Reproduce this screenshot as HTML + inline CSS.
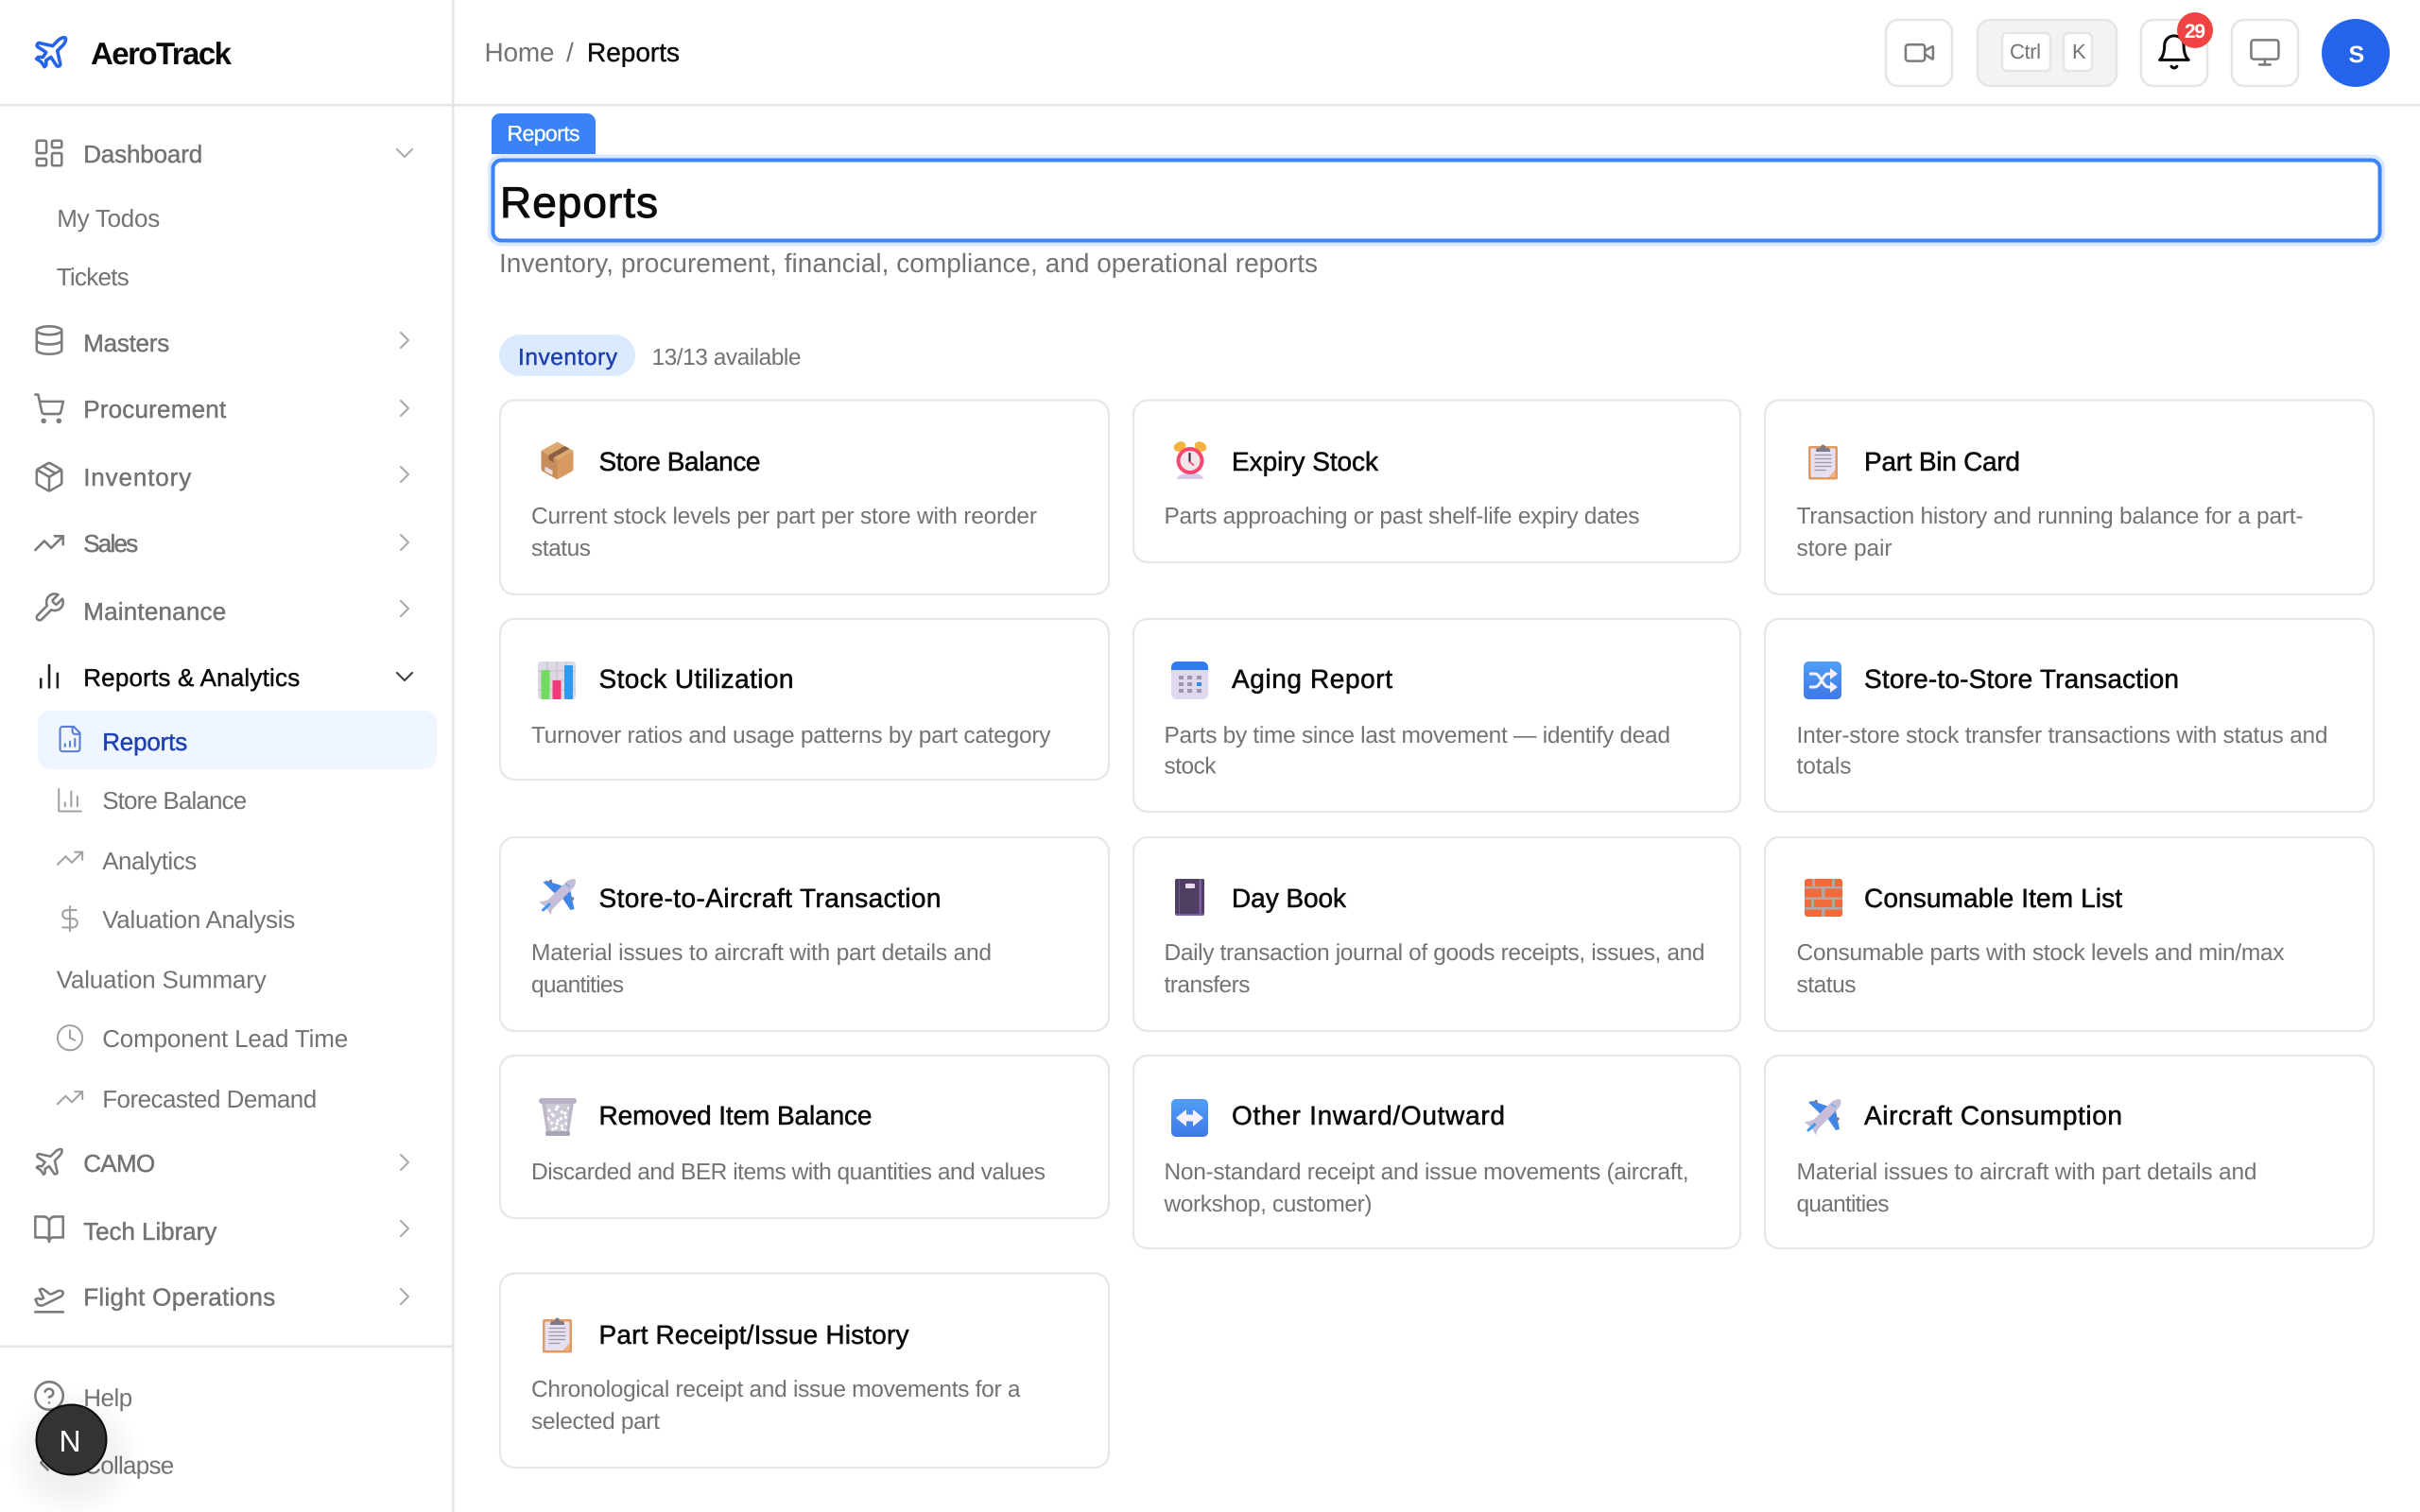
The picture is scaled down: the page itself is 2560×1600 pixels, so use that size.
<!DOCTYPE html>
<html lang="en">
<head>
<meta charset="utf-8">
<title>AeroTrack - Reports</title>
<style>
html,body{margin:0;padding:0;background:#fff;width:2560px;height:1600px;overflow:hidden}
svg{display:block}
text{font-family:"Liberation Sans",sans-serif;text-rendering:geometricPrecision}
.m{font-size:26px;fill:#737373;stroke:#737373;stroke-width:.45px;transform:translateX(-.8px)}
.s{font-size:26px;fill:#737373;transform:translateX(-.8px)}
.t{font-size:28px;fill:#0a0a0a;stroke:#0a0a0a;stroke-width:.55px}
.d{font-size:24.5px;fill:#737373;transform:translate(-.5px,-1px)}
.i{fill:none;stroke:#7c7c7c;stroke-width:1.75;stroke-linecap:round;stroke-linejoin:round}
.j{fill:none;stroke:#a3a3a3;stroke-width:1.6;stroke-linecap:round;stroke-linejoin:round}
.c{fill:none;stroke:#ababab;stroke-width:1.6;stroke-linecap:round;stroke-linejoin:round}
.card{fill:#fff;stroke:#e7e7e7;stroke-width:2.3}
.b{fill:#fff;stroke:#e5e5e5;stroke-width:2.5}
</style>
</head>
<body>
<svg xmlns="http://www.w3.org/2000/svg" width="2560" height="1600" viewBox="0 0 2560 1600">
<defs>
<linearGradient id="gb" x1="0" y1="0" x2="0" y2="1"><stop offset="0" stop-color="#4f9ff7"/><stop offset="1" stop-color="#3f78e6"/></linearGradient>
<radialGradient id="gs"><stop offset="0" stop-color="#000" stop-opacity=".09"/><stop offset=".55" stop-color="#000" stop-opacity=".05"/><stop offset="1" stop-color="#000" stop-opacity="0"/></radialGradient>
<symbol id="e-clip" viewBox="0 0 40 40">
<rect x="4.5" y="4" width="31" height="35.5" rx="2" fill="#e29a60"/>
<rect x="7" y="6.5" width="26" height="30.5" rx="1" fill="#e6e0f0"/>
<path d="M26 37l7-8v6a2 2 0 0 1-2 2z" fill="#efb184"/>
<path d="M11 13.5h18M11 17.5h18M11 21.5h18M11 25.5h18M11 29.5h12" stroke="#9c96ab" stroke-width="1.2" fill="none"/>
<path d="M12.5 9c0-2 1-3 3-3h1.5c.5-2 1.5-3.5 3-3.5s2.5 1.5 3 3.5h1.5c2 0 3 1 3 3v1h-15z" fill="#7f7a8a"/>
</symbol>
<symbol id="e-plane" viewBox="0 0 40 40">
<path d="M5 4.500 9 3 27 9 18 17z" fill="#3f86e8"/>
<path d="M23 18 33 9 38 33 34 34z" fill="#3f86e8"/>
<circle cx="13" cy="3.500" r="1.800" fill="#7e7a88"/><circle cx="36" cy="22" r="1.800" fill="#7e7a88"/>
<path d="M30 3.500c3-2 8-3 9-1.500s.5 5-1.500 8L17 31c-2 2-3 3-3.500 7.500L13 39 8 31 .5 25.500c3-.5 9-1.500 11-3.500z" fill="#c7bdd8"/>
<path d="M5 34l6.500-6" stroke="#3f98f0" stroke-width="3" stroke-linecap="round"/>
<path d="M29.500 6.500l4 3" stroke="#2f9cf0" stroke-width="1.500" stroke-dasharray="1.200 .8"/>
</symbol>
</defs>

<!-- chrome -->
<rect x="478" y="0" width="2.500" height="1600" fill="#e5e5e5"/>
<rect x="0" y="110" width="2560" height="2.500" fill="#e5e5e5"/>
<rect x="0" y="1423.500" width="478" height="2.500" fill="#e5e5e5"/>

<!-- logo -->
<g transform="translate(33.500,35) scale(1.700)" fill="none" stroke="#2563eb" stroke-width="2.100" stroke-linecap="round" stroke-linejoin="round"><path d="M17.800 19.200 16 11l3.500-3.500C21 6 21.500 4 21 3c-1-.5-3 0-4.500 1.500L13 8 4.800 6.200c-.5-.1-.9.1-1.100.5l-.3.5c-.2.500-.1 1 .3 1.300L9 12l-2 3H4l-1 1 3 2 2 3 1-1v-3l3-2 3.500 5.300c.3.4.8.5 1.300.3l.5-.2c.4-.3.6-.7.5-1.200z"/></g>
<text x="96" y="68" font-size="33" font-weight="700" fill="#0a0a0a" textLength="149">AeroTrack</text>

<!-- nav icons -->
<g transform="translate(34.400,144.400) scale(1.470)" class="i"><rect width="7" height="9" x="3" y="3" rx="1"/><rect width="7" height="5" x="14" y="3" rx="1"/><rect width="7" height="9" x="14" y="12" rx="1"/><rect width="7" height="5" x="3" y="16" rx="1"/></g>
<g transform="translate(34.400,342.400) scale(1.470)" class="i"><ellipse cx="12" cy="5" rx="9" ry="3"/><path d="M3 5V19A9 3 0 0 0 21 19V5"/><path d="M3 12A9 3 0 0 0 21 12"/></g>
<g transform="translate(34.400,414.500) scale(1.470)" class="i"><circle cx="8" cy="21" r="1"/><circle cx="19" cy="21" r="1"/><path d="M2.050 2.050h2l2.660 12.420a2 2 0 0 0 2 1.580h9.780a2 2 0 0 0 1.950-1.570l1.650-7.430H5.120"/></g>
<g transform="translate(34.400,487) scale(1.470)" class="i"><path d="M11 21.730a2 2 0 0 0 2 0l7-4A2 2 0 0 0 21 16V8a2 2 0 0 0-1-1.730l-7-4a2 2 0 0 0-2 0l-7 4A2 2 0 0 0 3 8v8a2 2 0 0 0 1 1.730z"/><path d="M12 22V12"/><path d="M3.300 7 12 12l8.700-5"/><path d="m7.500 4.270 9 5.150"/></g>
<g transform="translate(34.400,557) scale(1.470)" class="i"><polyline points="22 7 13.500 15.500 8.500 10.500 2 17"/><polyline points="16 7 22 7 22 13"/></g>
<g transform="translate(34.400,625.500) scale(1.470)" class="i"><path d="M14.700 6.300a1 1 0 0 0 0 1.400l1.600 1.600a1 1 0 0 0 1.400 0l3.770-3.770a6 6 0 0 1-7.940 7.940l-6.910 6.910a2.120 2.120 0 0 1-3-3l6.910-6.910a6 6 0 0 1 7.940-7.940l-3.760 3.760z"/></g>
<g transform="translate(34.400,698) scale(1.470)" class="i" style="stroke:#1f1f1f"><line x1="18" y1="20" x2="18" y2="10"/><line x1="12" y1="20" x2="12" y2="4"/><line x1="6" y1="20" x2="6" y2="14"/></g>
<g transform="translate(34.400,1212) scale(1.470)" class="i"><path d="M17.800 19.200 16 11l3.500-3.500C21 6 21.500 4 21 3c-1-.5-3 0-4.500 1.500L13 8 4.800 6.200c-.5-.1-.9.1-1.100.5l-.3.5c-.2.500-.1 1 .3 1.300L9 12l-2 3H4l-1 1 3 2 2 3 1-1v-3l3-2 3.500 5.300c.3.4.8.5 1.300.3l.5-.2c.4-.3.6-.7.5-1.200z"/></g>
<g transform="translate(34.400,1283) scale(1.470)" class="i"><path d="M2 3h6a4 4 0 0 1 4 4v14a3 3 0 0 0-3-3H2z"/><path d="M22 3h-6a4 4 0 0 0-4 4v14a3 3 0 0 1 3-3h7z"/></g>
<g transform="translate(34.400,1356) scale(1.470)" class="i"><path d="M2 22h20"/><path d="M6.360 17.400 4 17l-2-4 1.100-.55a2 2 0 0 1 1.800 0l.17.1a2 2 0 0 0 1.800 0L8 12 5 6l.9-.45a2 2 0 0 1 2.090.2l4.020 3a2 2 0 0 0 2.100.2l4.190-2.060a2.410 2.410 0 0 1 1.730-.17L21 7a1.400 1.400 0 0 1 .87 1.990l-.38.76c-.23.46-.6.84-1.070 1.080L7.580 17.200a2 2 0 0 1-1.220.18Z"/></g>
<g transform="translate(34.400,1459.400) scale(1.470)" class="i"><circle cx="12" cy="12" r="10"/><path d="M9.090 9a3 3 0 0 1 5.830 1c0 2-3 3-3 3"/><path d="M12 17h.01"/></g>
<g transform="translate(34.400,1530.400) scale(1.470)" class="i"><path d="m11 17-5-5 5-5"/><path d="m18 17-5-5 5-5"/></g>

<!-- active row -->
<rect x="40" y="752" width="422" height="62" rx="13" fill="#eff6ff"/>

<!-- sub icons -->
<g transform="translate(58.300,766.300) scale(1.310)" class="j" style="stroke:#5a7fd0"><path d="M15 2H6a2 2 0 0 0-2 2v16a2 2 0 0 0 2 2h12a2 2 0 0 0 2-2V7Z"/><path d="M14 2v4a2 2 0 0 0 2 2h4"/><path d="M8 18v-2"/><path d="M12 18v-4"/><path d="M16 18v-6"/></g>
<g transform="translate(58.300,831) scale(1.310)" class="j"><path d="M3 3v18h18"/><path d="M18 17V9"/><path d="M13 17V5"/><path d="M8 17v-3"/></g>
<g transform="translate(58.300,892.500) scale(1.310)" class="j"><polyline points="22 7 13.500 15.500 8.500 10.500 2 17"/><polyline points="16 7 22 7 22 13"/></g>
<g transform="translate(58.300,956.500) scale(1.310)" class="j"><line x1="12" y1="2" x2="12" y2="22"/><path d="M17 5H9.500a3.500 3.500 0 0 0 0 7h5a3.500 3.500 0 0 1 0 7H6"/></g>
<g transform="translate(58.300,1082.500) scale(1.310)" class="j"><circle cx="12" cy="12" r="10"/><polyline points="12 6 12 12 16 14"/></g>
<g transform="translate(58.300,1146) scale(1.310)" class="j"><polyline points="22 7 13.500 15.500 8.500 10.500 2 17"/><polyline points="16 7 22 7 22 13"/></g>

<!-- chevrons -->
<g transform="translate(412,146) scale(1.333)" class="c"><path d="m6 9 6 6 6-6"/></g>
<g transform="translate(412,344) scale(1.333)" class="c"><path d="m9 18 6-6-6-6"/></g>
<g transform="translate(412,416) scale(1.333)" class="c"><path d="m9 18 6-6-6-6"/></g>
<g transform="translate(412,486) scale(1.333)" class="c"><path d="m9 18 6-6-6-6"/></g>
<g transform="translate(412,558) scale(1.333)" class="c"><path d="m9 18 6-6-6-6"/></g>
<g transform="translate(412,628) scale(1.333)" class="c"><path d="m9 18 6-6-6-6"/></g>
<g transform="translate(412,700) scale(1.333)" class="c" style="stroke:#404040"><path d="m6 9 6 6 6-6"/></g>
<g transform="translate(412,1214) scale(1.333)" class="c"><path d="m9 18 6-6-6-6"/></g>
<g transform="translate(412,1284) scale(1.333)" class="c"><path d="m9 18 6-6-6-6"/></g>
<g transform="translate(412,1356) scale(1.333)" class="c"><path d="m9 18 6-6-6-6"/></g>

<!-- nav text -->
<text class="m" x="89" y="172" textLength="126">Dashboard</text>
<text class="s" x="61" y="240" textLength="109">My Todos</text>
<text class="s" x="60.500" y="302" textLength="77">Tickets</text>
<text class="m" x="89" y="372" textLength="91">Masters</text>
<text class="m" x="89" y="442" textLength="151">Procurement</text>
<text class="m" x="89" y="514" textLength="114">Inventory</text>
<text class="m" x="89" y="584" textLength="58">Sales</text>
<text class="m" x="89" y="656" textLength="151">Maintenance</text>
<text class="m" x="89" y="726" textLength="229" style="fill:#0a0a0a;stroke:#0a0a0a">Reports &amp; Analytics</text>
<text class="m" x="109" y="794" textLength="90" style="fill:#1e40af;stroke:#1e40af">Reports</text>
<text class="s" x="109" y="856" textLength="153">Store Balance</text>
<text class="s" x="109" y="920" textLength="100">Analytics</text>
<text class="s" x="109" y="982" textLength="204">Valuation Analysis</text>
<text class="s" x="60.500" y="1045.500" textLength="222">Valuation Summary</text>
<text class="s" x="109" y="1108" textLength="260">Component Lead Time</text>
<text class="s" x="109" y="1172" textLength="227">Forecasted Demand</text>
<text class="m" x="89" y="1240" textLength="76">CAMO</text>
<text class="m" x="89" y="1312" textLength="141">Tech Library</text>
<text class="m" x="89" y="1381.500" textLength="203">Flight Operations</text>
<text class="s" x="89" y="1488" textLength="52">Help</text>
<text class="s" x="89" y="1559.500" textLength="96">Collapse</text>

<!-- next indicator -->
<circle cx="76" cy="1538" r="72" fill="url(#gs)"/>
<circle cx="75.500" cy="1523.500" r="37" fill="#333" stroke="#0a0a0a" stroke-width="2"/>
<text x="62.500" y="1536" font-size="32" fill="#fff" textLength="24">N</text>

<!-- header -->
<text x="512.500" y="65" font-size="28" fill="#737373" textLength="74">Home</text>
<text x="599" y="65" font-size="28" fill="#737373">/</text>
<text x="621" y="65" font-size="28" fill="#0a0a0a" stroke="#0a0a0a" stroke-width=".4" textLength="98">Reports</text>

<rect class="b" x="1995" y="21" width="70" height="70" rx="13"/>
<g transform="translate(2013,38.500) scale(1.450)" class="i"><path d="m16 13 5.223 3.482a.5.5 0 0 0 .777-.416V7.870a.5.5 0 0 0-.752-.432L16 10.500"/><rect x="2" y="6" width="14" height="12" rx="2"/></g>

<rect x="2092" y="21" width="147" height="70" rx="13" fill="#f3f3f3" stroke="#e5e5e5" stroke-width="2.500"/>
<rect class="b" x="2118" y="35" width="51" height="40" rx="5"/>
<rect class="b" x="2183" y="35" width="30" height="40" rx="5"/>
<text x="2126" y="62" font-size="22" fill="#737373" textLength="33">Ctrl</text>
<text x="2192" y="62" font-size="22" fill="#737373" textLength="13">K</text>

<rect class="b" x="2265" y="21" width="70" height="70" rx="13"/>
<g transform="translate(2279.500,34.500) scale(1.700)" fill="none" stroke="#0a0a0a" stroke-width="1.800" stroke-linecap="round" stroke-linejoin="round"><path d="M6 8a6 6 0 0 1 12 0c0 7 3 9 3 9H3s3-2 3-9"/><path d="M10.300 21a1.940 1.940 0 0 0 3.400 0"/></g>
<circle cx="2322" cy="32" r="19" fill="#ef4444"/>
<text x="2311" y="40" font-size="21" font-weight="700" fill="#fff" textLength="22">29</text>

<rect class="b" x="2361" y="21" width="70" height="70" rx="13"/>
<g transform="translate(2378.500,38) scale(1.450)" class="i"><rect width="20" height="14" x="2" y="3" rx="2"/><line x1="8" y1="21" x2="16" y2="21"/><line x1="12" y1="17" x2="12" y2="21"/></g>

<circle cx="2492" cy="56" r="36" fill="#2563eb"/>
<text x="2484.500" y="66" font-size="25" font-weight="700" fill="#fff" textLength="14">S</text>

<!-- page title -->
<path d="M520 163v-34a9 9 0 0 1 9-9h92a9 9 0 0 1 9 9v34z" fill="#3b82f6"/>
<text x="536.500" y="149" font-size="23" fill="#fff" stroke="#fff" stroke-width=".3" textLength="77">Reports</text>
<rect x="519" y="166.500" width="2001" height="91" rx="11" fill="#fff" stroke="#dbe8fd" stroke-width="6"/>
<rect x="521.500" y="169.500" width="1996" height="85" rx="9" fill="#fff" stroke="#3b82f6" stroke-width="4"/>
<text x="529" y="230" font-size="46" font-weight="400" fill="#0a0a0a" stroke="#0a0a0a" stroke-width="1" textLength="167">Reports</text>
<text x="528" y="288" font-size="28" fill="#737373" textLength="866">Inventory, procurement, financial, compliance, and operational reports</text>

<rect x="528" y="354" width="144" height="44" rx="22" fill="#dbeafe"/>
<text x="548" y="386" font-size="24.500" fill="#1e40af" stroke="#1e40af" stroke-width=".45" textLength="105">Inventory</text>
<text x="689.500" y="386" font-size="24.500" fill="#737373" textLength="158">13/13 available</text>

<!-- cards -->
<rect class="card" x="529" y="423.500" width="644" height="205.500" rx="15"/>
<rect class="card" x="1199" y="423.500" width="642" height="171.500" rx="15"/>
<rect class="card" x="1867" y="423.500" width="644" height="205.500" rx="15"/>
<rect class="card" x="529" y="655" width="644" height="170" rx="15"/>
<rect class="card" x="1199" y="655" width="642" height="204" rx="15"/>
<rect class="card" x="1867" y="655" width="644" height="204" rx="15"/>
<rect class="card" x="529" y="886" width="644" height="205" rx="15"/>
<rect class="card" x="1199" y="886" width="642" height="205" rx="15"/>
<rect class="card" x="1867" y="886" width="644" height="205" rx="15"/>
<rect class="card" x="529" y="1117" width="644" height="172" rx="15"/>
<rect class="card" x="1199" y="1117" width="642" height="204" rx="15"/>
<rect class="card" x="1867" y="1117" width="644" height="204" rx="15"/>
<rect class="card" x="529" y="1347.500" width="644" height="205.500" rx="15"/>

<!-- card text -->
<text class="t" x="633.500" y="498" textLength="171">Store Balance</text>
<text class="d" x="562.500" y="555" textLength="535">Current stock levels per part per store with reorder</text>
<text class="d" x="562.500" y="589" textLength="63">status</text>
<text class="t" x="1303" y="498" textLength="155">Expiry Stock</text>
<text class="d" x="1232" y="555" textLength="503">Parts approaching or past shelf-life expiry dates</text>
<text class="t" x="1972" y="498" textLength="165">Part Bin Card</text>
<text class="d" x="1901" y="555" textLength="536">Transaction history and running balance for a part-</text>
<text class="d" x="1901" y="589" textLength="101">store pair</text>

<text class="t" x="633.500" y="728" textLength="206">Stock Utilization</text>
<text class="d" x="562.500" y="787" textLength="549.500">Turnover ratios and usage patterns by part category</text>
<text class="t" x="1303" y="728" textLength="170">Aging Report</text>
<text class="d" x="1232" y="787" textLength="535.500">Parts by time since last movement — identify dead</text>
<text class="d" x="1232" y="819.500" textLength="55">stock</text>
<text class="t" x="1972" y="728" textLength="333">Store-to-Store Transaction</text>
<text class="d" x="1901" y="787" textLength="562">Inter-store stock transfer transactions with status and</text>
<text class="d" x="1901" y="819.500" textLength="58">totals</text>

<text class="t" x="633.500" y="960" textLength="362">Store-to-Aircraft Transaction</text>
<text class="d" x="562.500" y="1017" textLength="487">Material issues to aircraft with part details and</text>
<text class="d" x="562.500" y="1051" textLength="98">quantities</text>
<text class="t" x="1303" y="960" textLength="121">Day Book</text>
<text class="d" x="1232" y="1017" textLength="572">Daily transaction journal of goods receipts, issues, and</text>
<text class="d" x="1232" y="1051" textLength="91">transfers</text>
<text class="t" x="1972" y="960" textLength="273">Consumable Item List</text>
<text class="d" x="1901" y="1017" textLength="516">Consumable parts with stock levels and min/max</text>
<text class="d" x="1901" y="1051" textLength="63">status</text>

<text class="t" x="633.500" y="1190" textLength="289">Removed Item Balance</text>
<text class="d" x="562.500" y="1249" textLength="544">Discarded and BER items with quantities and values</text>
<text class="t" x="1303" y="1190" textLength="289">Other Inward/Outward</text>
<text class="d" x="1232" y="1249" textLength="555">Non-standard receipt and issue movements (aircraft,</text>
<text class="d" x="1232" y="1283" textLength="220">workshop, customer)</text>
<text class="t" x="1972" y="1190" textLength="273">Aircraft Consumption</text>
<text class="d" x="1901" y="1249" textLength="487">Material issues to aircraft with part details and</text>
<text class="d" x="1901" y="1283" textLength="98">quantities</text>

<text class="t" x="633.500" y="1422" textLength="328">Part Receipt/Issue History</text>
<text class="d" x="562.500" y="1479" textLength="517.500">Chronological receipt and issue movements for a</text>
<text class="d" x="562.500" y="1513" textLength="136">selected part</text>

<!-- emoji: box -->
<g transform="translate(572.500,467.500)">
<path d="M17 0 34 9.500 17 19 0 9.500z" fill="#dba86e"/>
<path d="M0 9.500 17 19V40L1 31a2 2 0 0 1-1-2z" fill="#c98d5c"/>
<path d="M34 9.500 17 19V40l16-9a2 2 0 0 0 1-2z" fill="#d79a62"/>
<path d="M8 14 25 4.500 30 7.200 13 17v5l-5-3z" fill="#8f5f45"/>
<path d="M4 26l8 4.500v5L4 31z" fill="#e8dfe6"/>
</g>
<!-- emoji: clock -->
<g transform="translate(1241,467)">
<ellipse cx="7" cy="5.500" rx="6.500" ry="5" fill="#f4b33e" transform="rotate(-25 7 5.500)"/>
<ellipse cx="29" cy="5.500" rx="6.500" ry="5" fill="#f4b33e" transform="rotate(25 29 5.500)"/>
<path d="M4 40c1-5 7-6 14-6s13 1 14 6z" fill="#dcc6ea"/>
<circle cx="18" cy="20.500" r="14.500" fill="#f6486e"/>
<circle cx="18" cy="20.500" r="10.500" fill="#f3e6ea"/>
<path d="M17.500 13v8.500" stroke="#3b2a4a" stroke-width="2.200" stroke-linecap="round"/>
<path d="M17.500 21.500l4 3.500" stroke="#f6486e" stroke-width="1.800" stroke-linecap="round"/>
</g>
<!-- clipboards -->
<use href="#e-clip" x="1908.500" y="468" width="40" height="40"/>
<use href="#e-clip" x="569.500" y="1392" width="40" height="40"/>
<!-- emoji: chart -->
<g transform="translate(569,700)">
<rect width="40" height="40" rx="4" fill="#dcd8e4"/>
<path d="M0 10h40M0 20h40M0 30h40M10 0v40M20 0v40M30 0v40" stroke="#c3bdcd" stroke-width="1"/>
<rect x="3.500" y="9" width="9" height="31" rx="1.500" fill="#72dc5e"/>
<rect x="15.500" y="20" width="9" height="20" rx="1.500" fill="#ef3a7c"/>
<rect x="28" y="4" width="9" height="36" rx="1.500" fill="#2f98ef"/>
</g>
<!-- emoji: calendar -->
<g transform="translate(1239,700)">
<rect width="39" height="40" rx="6" fill="#e0d8ee"/>
<path d="M0 9V6a6 6 0 0 1 6-6h27a6 6 0 0 1 6 6v3z" fill="#2f7cf0"/>
<g fill="#9d98a8"><rect x="8" y="15" width="5" height="4"/><rect x="17" y="15" width="5" height="4"/><rect x="27" y="15" width="5" height="4"/><rect x="8" y="22" width="5" height="4"/><rect x="17" y="22" width="5" height="4"/><rect x="8" y="29" width="5" height="4"/><rect x="17" y="29" width="5" height="4"/><rect x="27" y="29" width="5" height="4"/></g>
<rect x="27" y="22" width="5" height="4" fill="#2f90f0"/>
</g>
<!-- emoji: shuffle -->
<g transform="translate(1908,700)">
<rect width="40" height="40" rx="5" fill="url(#gb)"/>
<g fill="none" stroke="#f4f0ff" stroke-width="3" stroke-linejoin="round"><path d="M6 13h6c6 0 8 14 14 14h5"/><path d="M6 27h6c6 0 8-14 14-14h5"/></g>
<path d="M28 7l8 6-8 6zM28 21l8 6-8 6z" fill="#f4f0ff"/>
</g>
<!-- planes -->
<use href="#e-plane" x="569.500" y="929" width="40" height="40"/>
<use href="#e-plane" x="1908" y="1162" width="40" height="40"/>
<!-- emoji: book -->
<g transform="translate(1243,930)">
<rect width="31" height="39" rx="2" fill="#7d5fa6"/>
<rect x="0" y="0" width="31" height="37" rx="2" fill="#4f3f63"/>
<rect x="4" y="0" width="1" height="37" fill="#6f5b88"/>
<rect x="25.500" y="0" width="2.500" height="39" fill="#7d5fa6"/>
<rect x="11" y="5" width="10" height="5" rx="1" fill="#e6dcee"/>
</g>
<!-- emoji: bricks -->
<g transform="translate(1909,930)">
<rect width="40" height="40" rx="3" fill="#b0a8a8"/>
<g fill="#f2693a">
<path d="M0 3a3 3 0 0 1 3-3h5v8H0z"/><rect x="11" width="18" height="8"/><path d="M32 0h5a3 3 0 0 1 3 3v5h-8z"/>
<rect y="10.500" width="18" height="9"/><rect x="21.500" y="10.500" width="18.500" height="9"/>
<rect y="22" width="7" height="8"/><rect x="10" y="22" width="19" height="8"/><rect x="32" y="22" width="8" height="8"/>
<path d="M0 32.500h18V40H3a3 3 0 0 1-3-3z"/><path d="M21.500 32.500H40V37a3 3 0 0 1-3 3H21.500z"/>
</g>
</g>
<!-- emoji: wastebasket -->
<g transform="translate(570,1162)">
<path d="M3 4h34l-5 32H8z" fill="#cdc8d6"/>
<g stroke="#fff" stroke-width="3" fill="none" stroke-dasharray="3 4"><path d="M9 24l12-16M14 34l20-26M24 34l10-14M10 12l20 24M8 20l14 16M19 8l14 18"/></g>
<path d="M3 4 8 36h3L7 4zM37 4 32 36h-3L33 4z" fill="#bdb7c8"/>
<rect x="0" y="0" width="40" height="6" rx="3" fill="#b8b2c4"/>
<rect x="7" y="35" width="26" height="5" rx="2" fill="#a9a3b6"/>
</g>
<!-- emoji: arrows -->
<g transform="translate(1239,1163)">
<rect width="39" height="40" rx="5" fill="url(#gb)"/>
<path d="M5 20l11-9v5.500h7V11l11 9-11 9v-5.500h-7V29z" fill="#f6f0ff"/>
</g>
</svg>
</body>
</html>
